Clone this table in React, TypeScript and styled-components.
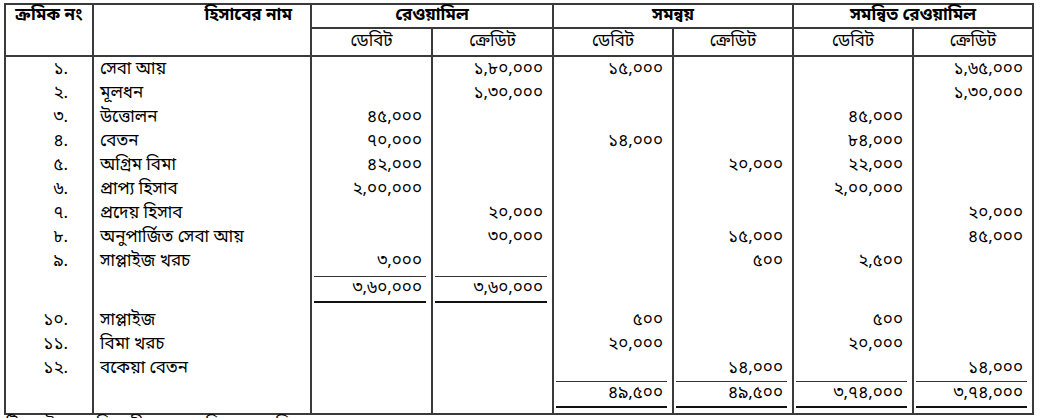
import React from "react";
import styled, { createGlobalStyle } from "styled-components";

const LINE = "#3a3a3a";

const GlobalStyle = createGlobalStyle`
  html, body { margin: 0; padding: 0; background: #ffffff; }
  body {
    font-family: "Noto Sans Bengali", "Noto Serif Bengali", "Lohit Bengali", "FreeSans", "Noto Sans", sans-serif;
    color: #000000;
  }
`;

const Page = styled.div`
  box-sizing: border-box;
  width: 1040px;
  height: 418px;
  overflow: hidden;
  padding: 3px 0 0 4px;
`;

const Sheet = styled.div`
  display: grid;
  box-sizing: border-box;
  width: 1030px;
  grid-template-columns: 88px 218px 121px 121px 120px 120px 120px 120px;
  grid-template-rows: 24px 28px repeat(9, 24px) 35px repeat(3, 24px) 33px;
  border-left: 2px solid ${LINE};
  border-top: 2px solid ${LINE};
  border-bottom: 2px solid ${LINE};
  font-size: 17px;
`;

const Cell = styled.div`
  box-sizing: border-box;
  border-right: 2px solid ${LINE};
  min-width: 0;
  white-space: nowrap;
`;

const CornerHead = styled(Cell)<{ $align: "center" | "right" }>`
  grid-row: span 2;
  border-bottom: 2px solid ${LINE};
  font-weight: 700;
  line-height: 22px;
  text-align: ${(p) => p.$align};
  padding-right: ${(p) => (p.$align === "right" ? "18px" : "0")};
`;

const GroupHead = styled(Cell)`
  grid-column: span 2;
  border-bottom: 2px solid ${LINE};
  font-weight: 700;
  line-height: 22px;
  text-align: center;
`;

const SubHead = styled(Cell)`
  border-bottom: 2px solid ${LINE};
  line-height: 26px;
  text-align: center;
`;

const SerialCell = styled(Cell)`
  line-height: 24px;
  padding-top: 1px;
  text-align: right;
  padding-right: 24px;
`;

const NameCell = styled(Cell)`
  line-height: 24px;
  padding-top: 1px;
  padding-left: 6px;
`;

const AmountCell = styled(Cell)`
  line-height: 24px;
  padding-top: 1px;
  text-align: right;
  padding-right: 9px;
`;

const TotalCell = styled(Cell)<{ $top: number }>`
  padding-top: ${(p) => p.$top}px;
`;

const Figure = styled.div`
  margin: 0 5px 0 2px;
  border-top: 1px solid #333333;
  border-bottom: 2px solid #111111;
  line-height: 24px;
  text-align: right;
  padding-right: 4px;
`;

const Note = styled.div`
  font-size: 16px;
  line-height: 18px;
  margin-top: 1px;
  padding-left: 2px;
`;

type Row = [string, string, string, string, string, string, string, string];

const rows: Row[] = [
  ["১.", "সেবা আয়", "", "১,৮০,০০০", "১৫,০০০", "", "", "১,৬৫,০০০"],
  ["২.", "মূলধন", "", "১,৩০,০০০", "", "", "", "১,৩০,০০০"],
  ["৩.", "উত্তোলন", "৪৫,০০০", "", "", "", "৪৫,০০০", ""],
  ["৪.", "বেতন", "৭০,০০০", "", "১৪,০০০", "", "৮৪,০০০", ""],
  ["৫.", "অগ্রিম বিমা", "৪২,০০০", "", "", "২০,০০০", "২২,০০০", ""],
  ["৬.", "প্রাপ্য হিসাব", "২,০০,০০০", "", "", "", "২,০০,০০০", ""],
  ["৭.", "প্রদেয় হিসাব", "", "২০,০০০", "", "", "", "২০,০০০"],
  ["৮.", "অনুপার্জিত সেবা আয়", "", "৩০,০০০", "", "১৫,০০০", "", "৪৫,০০০"],
  ["৯.", "সাপ্লাইজ খরচ", "৩,০০০", "", "", "৫০০", "২,৫০০", ""],
];

const laterRows: Row[] = [
  ["১০.", "সাপ্লাইজ", "", "", "৫০০", "", "৫০০", ""],
  ["১১.", "বিমা খরচ", "", "", "২০,০০০", "", "২০,০০০", ""],
  ["১২.", "বকেয়া বেতন", "", "", "", "১৪,০০০", "", "১৪,০০০"],
];

const subTotal = ["", "", "৩,৬০,০০০", "৩,৬০,০০০", "", "", "", ""];
const grandTotal = ["", "", "", "", "৪৯,৫০০", "৪৯,৫০০", "৩,৭৪,০০০", "৩,৭৪,০০০"];

function DataRow({ row }: { row: Row }) {
  return (
    <>
      <SerialCell>{row[0]}</SerialCell>
      <NameCell>{row[1]}</NameCell>
      {row.slice(2).map((v, i) => (
        <AmountCell key={i}>{v}</AmountCell>
      ))}
    </>
  );
}

function TotalRow({ values, top }: { values: string[]; top: number }) {
  return (
    <>
      {values.map((v, i) => (
        <TotalCell key={i} $top={top}>
          {v ? <Figure>{v}</Figure> : null}
        </TotalCell>
      ))}
    </>
  );
}

export default function App() {
  return (
    <>
      <GlobalStyle />
      <Page>
        <Sheet>
          <CornerHead $align="center">ক্রমিক নং</CornerHead>
          <CornerHead $align="right">হিসাবের নাম</CornerHead>
          <GroupHead>রেওয়ামিল</GroupHead>
          <GroupHead>সমন্বয়</GroupHead>
          <GroupHead>সমন্বিত রেওয়ামিল</GroupHead>
          {[0, 1, 2].map((g) => (
            <React.Fragment key={g}>
              <SubHead>ডেবিট</SubHead>
              <SubHead>ক্রেডিট</SubHead>
            </React.Fragment>
          ))}
          {rows.map((r) => (
            <DataRow key={r[0]} row={r} />
          ))}
          <TotalRow values={subTotal} top={3} />
          {laterRows.map((r) => (
            <DataRow key={r[0]} row={r} />
          ))}
          <TotalRow values={grandTotal} top={1} />
        </Sheet>
        <Note>টিকা: উপরের বিবরণী থেকে সমন্বিত রেওয়ামিল প্রস্তুত করা হয়েছে।</Note>
      </Page>
    </>
  );
}
